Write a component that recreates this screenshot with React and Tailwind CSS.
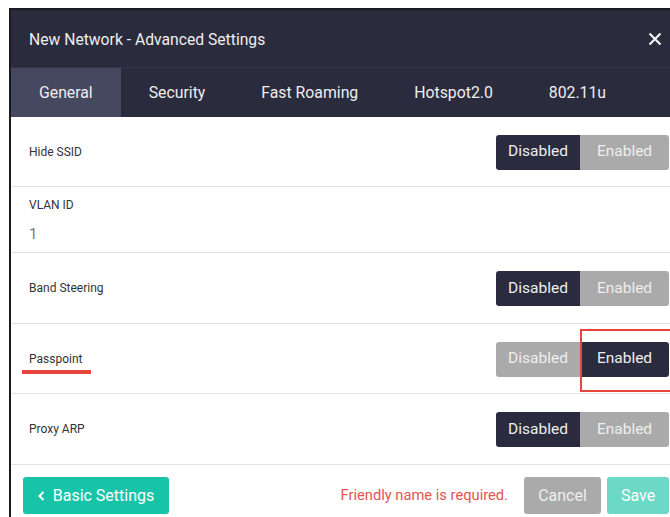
import React, { useState } from 'react';

const tabs = ['General', 'Security', 'Fast Roaming', 'Hotspot2.0', '802.11u'];

// on/off switch made of two joined buttons
const Toggle = ({ value, highlight }) => {
    const on = 'bg-[#2a2b3e] text-[#eeeeee]';
    const off = 'bg-[#aaaaaa] text-[#eeeeee]';
    return (
        <div className="relative flex h-[36px] pt-[1px] text-[15.5px]">
            <div className={`flex w-[84px] items-center justify-center rounded-l-[3px] ${value ? off : on}`}>
                Disabled
            </div>
            <div className={`flex w-[89px] items-center justify-center rounded-r-[3px] ${value ? on : off}`}>
                Enabled
            </div>
            {highlight && (
                <div className="absolute left-[84px] top-[-12px] h-[63px] w-[92px] border-2 border-[#e8453c]" />
            )}
        </div>
    );
};

const ToggleRow = ({ label, value, highlight, underline, height }) => (
    <div className={`flex items-center justify-between border-b border-[#e2e2e2] pl-[18px] pr-[1px] ${height}`}>
        <div className="relative text-[12px] text-[#333333]">
            {label}
            {underline && <div className="absolute left-[-7px] top-[20px] h-[4px] w-[69px] bg-[#e8453c]" />}
        </div>
        <Toggle value={value} highlight={highlight} />
    </div>
);

export default function App() {
    const [activeTab] = useState('General');

    return (
        <div className="h-[517px] w-[670px] overflow-hidden bg-white pl-[9px] pt-[8px]" style={{ fontFamily: 'Roboto, "Noto Sans", sans-serif' }}>
            <div className="h-[520px] w-[661px] border-l-2 border-t-2 border-[#1b1b1f] bg-white">
                {/* Header */}
                <div className="flex h-[58px] items-center justify-between border-b border-[#34354a] bg-[#2a2b3d] pl-[18px] pr-[8px]">
                    <h1 className="pt-[2px] text-[15.7px] text-[#eeeeee]">New Network - Advanced Settings</h1>
                    <svg className="h-[14px] w-[14px]" viewBox="0 0 14 14" fill="none" stroke="#f2f2f2" strokeWidth="2.2">
                        <path d="M1.5 1.5l11 11M12.5 1.5l-11 11" />
                    </svg>
                </div>

                {/* Tabs */}
                <div className="flex h-[49px] bg-[#2a2b3d]">
                    {tabs.map((t) => (
                        <div
                            key={t}
                            className={`flex items-center px-[28px] pt-[1px] text-[15.8px] text-[#eeeeee] ${t === activeTab ? 'bg-[#46485f]' : ''}`}
                        >
                            {t}
                        </div>
                    ))}
                </div>

                {/* Settings rows */}
                <ToggleRow label="Hide SSID" value={false} height="h-[70px]" />
                <div className="flex h-[66px] flex-col border-b border-[#e2e2e2] pl-[18px] pt-[9px]">
                    <span className="text-[12px] text-[#333333]">VLAN ID</span>
                    <span className="mt-[9px] text-[15px] text-[#777777]">1</span>
                </div>
                <ToggleRow label="Band Steering" value={false} height="h-[71px]" />
                <ToggleRow label="Passpoint" value={true} highlight underline height="h-[70px]" />
                <ToggleRow label="Proxy ARP" value={false} height="h-[71px]" />

                {/* Footer */}
                <div className="flex items-center pl-[12px] pr-[1px] pt-[12px]">
                    <button className="flex h-[37px] w-[146px] items-center justify-center gap-[8px] rounded-[3px] bg-[#17c4a8] text-[16px] text-white">
                        <svg className="h-[10px] w-[7px]" viewBox="0 0 7 10" fill="none" stroke="white" strokeWidth="2">
                            <path d="M5.5 1L1.5 5l4 4" />
                        </svg>
                        Basic Settings
                    </button>
                    <span className="ml-auto mr-[16px] text-[14.7px] text-[#e25454]">Friendly name is required.</span>
                    <button className="h-[37px] w-[77px] rounded-[3px] bg-[#aaaaaa] text-[16px] text-[#eeeeee]">Cancel</button>
                    <button className="ml-[6px] h-[37px] w-[62px] rounded-[3px] bg-[#6bd9c6] text-[16px] text-white">Save</button>
                </div>
            </div>
        </div>
    );
}
